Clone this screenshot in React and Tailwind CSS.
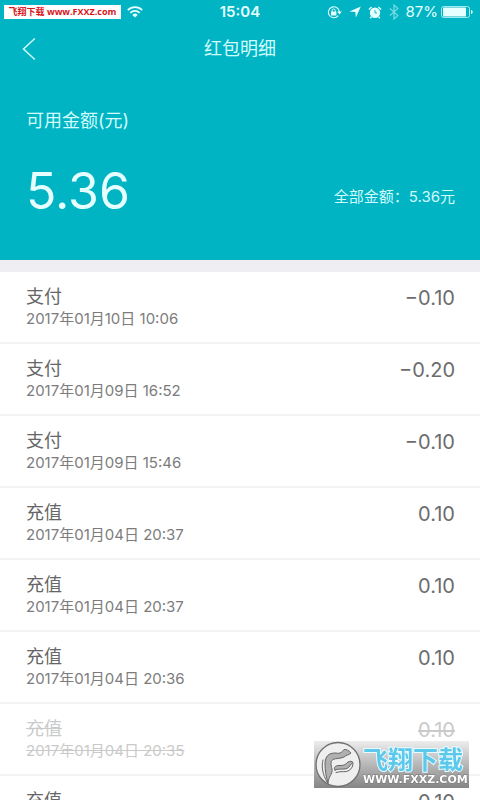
import React from "react";

const records = [
  { id: 1, type: "支付", time: "2017年01月10日 10:06", amount: "−0.10" },
  { id: 2, type: "支付", time: "2017年01月09日 16:52", amount: "−0.20" },
  { id: 3, type: "支付", time: "2017年01月09日 15:46", amount: "−0.10" },
  { id: 4, type: "充值", time: "2017年01月04日 20:37", amount: "0.10" },
  { id: 5, type: "充值", time: "2017年01月04日 20:37", amount: "0.10" },
  { id: 6, type: "充值", time: "2017年01月04日 20:36", amount: "0.10" },
  { id: 7, type: "充值", time: "2017年01月04日 20:35", amount: "0.10", expired: true },
  { id: 8, type: "充值", time: "2017年01月04日 20:35", amount: "0.10" }
];

function WifiIcon() {
  return (
    <svg width="16" height="12" viewBox="0 0 16 12" fill="none" stroke="currentColor" strokeWidth="1.8">
      <path d="M0.8 4.2a10.2 10.2 0 0 1 14.4 0" />
      <path d="M3.3 6.8a6.7 6.7 0 0 1 9.4 0" />
      <path d="M8 11.6 5.3 8.9a3.9 3.9 0 0 1 5.4 0z" fill="currentColor" stroke="none" />
    </svg>
  );
}

function LockIcon() {
  return (
    <svg width="15" height="13" viewBox="0 0 15 13" fill="none" stroke="currentColor">
      <path d="M11.3 9.6A5.5 5.5 0 1 1 12.4 6" strokeWidth="1.1" />
      <path d="M10.2 5.6h4.6l-2.3 3z" fill="currentColor" stroke="none" />
      <rect x="4" y="5.6" width="5.4" height="4" rx="0.5" fill="currentColor" stroke="none" />
      <path d="M5.1 5.8V4.6a1.6 1.6 0 0 1 3.2 0v1.2" strokeWidth="1" />
    </svg>
  );
}

function LocationIcon() {
  return (
    <svg width="12" height="12" viewBox="0 0 12 12" fill="currentColor">
      <path d="M11.8 0.4 6.9 11.6 6.3 6 0.4 5.4z" />
    </svg>
  );
}

function AlarmIcon() {
  return (
    <svg width="14" height="13" viewBox="0 0 14 13" fill="none" stroke="currentColor">
      <circle cx="7" cy="6.8" r="5.2" fill="currentColor" stroke="none" />
      <path d="M7 4v3h2" stroke="#00b4c4" strokeWidth="0.9" />
      <path d="M0.9 3.4 3.6 1M13.1 3.4 10.4 1M3.4 10.8l-1.2 1.5M10.6 10.8l1.2 1.5" strokeWidth="1.4" />
    </svg>
  );
}

function BluetoothIcon() {
  return (
    <svg width="10" height="16" viewBox="0 0 10 16" fill="none" stroke="currentColor" strokeWidth="1.2" opacity="0.55">
      <path d="M0.8 4.4 8.8 11.6 5 15V1l3.8 3.4-8 7.2" />
    </svg>
  );
}

function BatteryIcon() {
  return (
    <svg width="32" height="12" viewBox="0 0 32 12" fill="none">
      <rect x="0.5" y="0.5" width="28" height="11" rx="2" stroke="currentColor" opacity="0.7" />
      <rect x="2" y="1.5" width="23" height="9" rx="0.6" fill="currentColor" />
      <path d="M30 4v4c1.1-.3 1.7-1 1.7-2S31.100 4.300 30 4z" fill="currentColor" />
    </svg>
  );
}

function StatusBar() {
  return (
    <div className="grid h-6 grid-cols-[1fr_auto_1fr] items-center text-[#e6ffff]">
      <div className="flex items-center gap-[6px] pl-1">
        <span className="flex h-[14px] w-[117px] justify-center bg-white font-['Open_Sans','Noto_Sans_CJK_SC',sans-serif] text-[9px] leading-[14px] font-bold whitespace-nowrap text-[#d8141c]">
          飞翔下载 www.FXXZ.com
        </span>
        <WifiIcon />
      </div>
      <span className="text-[15px] font-semibold">15:04</span>
      <div className="flex items-center justify-end gap-[7px] pr-[7px]">
        <LockIcon />
        <LocationIcon />
        <AlarmIcon />
        <BluetoothIcon />
        <div className="flex items-center gap-[3px]">
          <span className="text-[15px]">87%</span>
          <BatteryIcon />
        </div>
      </div>
    </div>
  );
}

function RecordRow({ record }) {
  return (
    <li
      className={
        record.expired
          ? "flex h-[72px] justify-between border-b-2 border-[#f3f3f4] pt-3 pr-[25px] pl-[26px] text-[#cacaca] line-through"
          : "flex h-[72px] justify-between border-b-2 border-[#f3f3f4] pt-3 pr-[25px] pl-[26px] text-[#6c6c6c]"
      }
    >
      <div>
        <p className={record.expired ? "text-lg leading-[26px]" : "text-lg leading-[26px] text-[#666]"}>
          {record.type}
        </p>
        <p className={record.expired ? "text-[15px] leading-[18px]" : "text-[15px] leading-[18px] text-[#7c7c7c]"}>
          {record.time}
        </p>
      </div>
      <span className="text-xl leading-7">{record.amount}</span>
    </li>
  );
}

function Watermark() {
  return (
    <div className="fixed right-[11px] bottom-3 flex h-[47px] w-[155px] items-center gap-[2px] bg-linear-to-b from-[#ededed] to-[#858585]">
      <svg width="47" height="47" viewBox="0 0 47 47" className="shrink-0">
        <circle cx="24" cy="23.500" r="22" fill="#efefef" stroke="#707070" strokeWidth="1.300" />
        <g fill="#b0b0b0" stroke="#666" strokeWidth="1" strokeLinejoin="round" strokeLinecap="round">
          <path d="M14 42C12 36 11 29 11 23C11 15 15 12 21 12C27 13 28 11 30 8.500C32 8 35 9.500 37 12C35 14 32 14 30 16C26 18 22 17 19 18.500C16 21 17 24 18 28C19 33 14 36 14 42z" />
          <path d="M9 19C7 26 9 34 13 41" fill="none" />
          <path d="M21 29C19 26 22 24.500 25 24.500C30 25 32 23 34 21C36 20 38 20 39 21.500C37 22 36 26 33 27.500C29 29 25 27 21 29z" />
          <path d="M22 31.500C28 29.500 31 32 35 29.500C38 27.500 39 25 39 22" fill="none" />
        </g>
      </svg>
      <div className="flex flex-col whitespace-nowrap">
        <span className="h-[30px] font-['Noto_Sans_CJK_SC',sans-serif] text-[25px] leading-[30px] font-bold text-[#5cc8ec] [paint-order:stroke] [-webkit-text-stroke:2px_#e8fbff]">
          飞翔下载
        </span>
        <span className="font-['DejaVu_Sans',sans-serif] text-[11px] leading-[14px] font-bold text-white [paint-order:stroke] [-webkit-text-stroke:1px_#777]">
          WWW.FXXZ.COM
        </span>
      </div>
    </div>
  );
}

export default function App() {
  return (
    <div className="h-screen overflow-hidden bg-white font-['Inter','Noto_Sans_CJK_SC',sans-serif]">
      <header className="bg-[#00b4c4] pb-[41px] text-[#d2fbfc]">
        <StatusBar />

        {/* title bar */}
        <div className="grid h-[50px] grid-cols-[1fr_auto_1fr] items-center">
          <button aria-label="返回" className="ml-[22px] w-4">
            <svg width="14" height="24" viewBox="0 0 14 24" fill="none" stroke="currentColor" strokeWidth="1.5">
              <path d="M12.800 1.500 1.500 12l11.300 10.500" />
            </svg>
          </button>
          <h1 className="text-lg">红包明细</h1>
        </div>

        {/* balance */}
        <div className="pt-[33px] pr-[25px] pl-[26px]">
          <p className="text-lg leading-7">可用金额(元)</p>
          <div className="flex items-end justify-between pt-7">
            <strong className="text-[50px] leading-14 font-normal text-[#e6ffff]">5.36</strong>
            <span className="pb-[10px] text-[15px] leading-6">全部金额：5.36元</span>
          </div>
        </div>
      </header>

      <ul className="border-t-12 border-[#efeff3]">
        {records.map(r => (
          <RecordRow key={r.id} record={r} />
        ))}
      </ul>

      <Watermark />
    </div>
  );
}
